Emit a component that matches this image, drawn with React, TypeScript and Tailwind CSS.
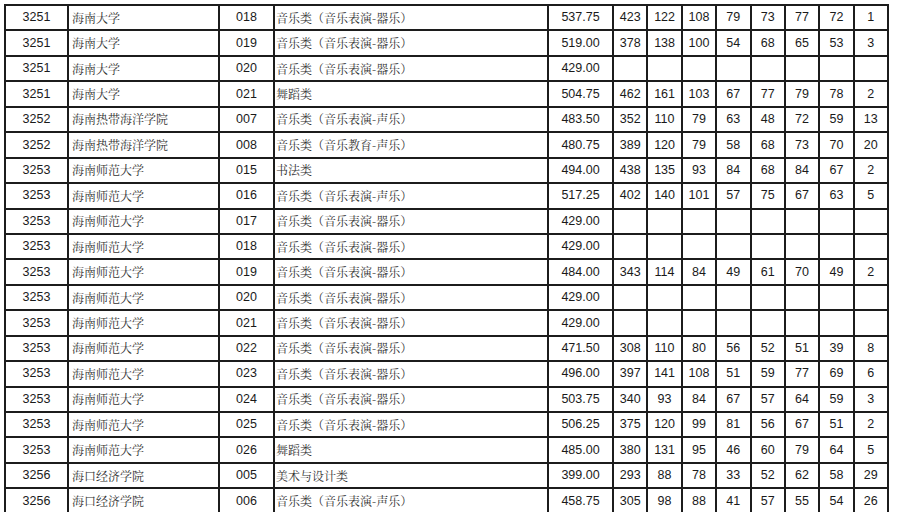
import React from 'react';

type Row = [string, string, string, string, string, string[]];

const ROWS: Row[] = [
  ['3251', '海南大学', '018', '音乐类（音乐表演-器乐）', '537.75', ['423', '122', '108', '79', '73', '77', '72', '1']],
  ['3251', '海南大学', '019', '音乐类（音乐表演-器乐）', '519.00', ['378', '138', '100', '54', '68', '65', '53', '3']],
  ['3251', '海南大学', '020', '音乐类（音乐表演-器乐）', '429.00', []],
  ['3251', '海南大学', '021', '舞蹈类', '504.75', ['462', '161', '103', '67', '77', '79', '78', '2']],
  ['3252', '海南热带海洋学院', '007', '音乐类（音乐表演-声乐）', '483.50', ['352', '110', '79', '63', '48', '72', '59', '13']],
  ['3252', '海南热带海洋学院', '008', '音乐类（音乐教育-声乐）', '480.75', ['389', '120', '79', '58', '68', '73', '70', '20']],
  ['3253', '海南师范大学', '015', '书法类', '494.00', ['438', '135', '93', '84', '68', '84', '67', '2']],
  ['3253', '海南师范大学', '016', '音乐类（音乐表演-声乐）', '517.25', ['402', '140', '101', '57', '75', '67', '63', '5']],
  ['3253', '海南师范大学', '017', '音乐类（音乐表演-器乐）', '429.00', []],
  ['3253', '海南师范大学', '018', '音乐类（音乐表演-器乐）', '429.00', []],
  ['3253', '海南师范大学', '019', '音乐类（音乐表演-器乐）', '484.00', ['343', '114', '84', '49', '61', '70', '49', '2']],
  ['3253', '海南师范大学', '020', '音乐类（音乐表演-器乐）', '429.00', []],
  ['3253', '海南师范大学', '021', '音乐类（音乐表演-器乐）', '429.00', []],
  ['3253', '海南师范大学', '022', '音乐类（音乐表演-器乐）', '471.50', ['308', '110', '80', '56', '52', '51', '39', '8']],
  ['3253', '海南师范大学', '023', '音乐类（音乐表演-器乐）', '496.00', ['397', '141', '108', '51', '59', '77', '69', '6']],
  ['3253', '海南师范大学', '024', '音乐类（音乐表演-器乐）', '503.75', ['340', '93', '84', '67', '57', '64', '59', '3']],
  ['3253', '海南师范大学', '025', '音乐类（音乐表演-器乐）', '506.25', ['375', '120', '99', '81', '56', '67', '51', '2']],
  ['3253', '海南师范大学', '026', '舞蹈类', '485.00', ['380', '131', '95', '46', '60', '79', '64', '5']],
  ['3256', '海口经济学院', '005', '美术与设计类', '399.00', ['293', '88', '78', '33', '52', '62', '58', '29']],
  ['3256', '海口经济学院', '006', '音乐类（音乐表演-声乐）', '458.75', ['305', '98', '88', '41', '57', '55', '54', '26']],
];

const cell = 'h-[25.45px] border-r-2 border-b-2 border-[#1c1c1c] flex items-center overflow-hidden whitespace-nowrap';
const num = `${cell} justify-center font-['Liberation_Sans',Arial,sans-serif] text-[12.5px] text-[#1a1a1a]`;
const han = `${cell} font-['Noto_Serif_CJK_SC','Noto_Sans_CJK_SC',serif] font-normal text-[12px] text-[#333]`;

export default function App() {
  return (
    <div className="w-[906px] h-[519px] bg-white overflow-hidden">
      <div className="pl-[4px] pt-[4px]">
        <div className="h-[508px] overflow-hidden w-fit">
          <div className="grid grid-cols-[63px_151px_55px_274px_65px_repeat(8,34.375px)] border-l-2 border-t-2 border-[#1c1c1c]">
            {ROWS.map(([code, school, major, name, score, stats], i) => (
              <React.Fragment key={i}>
                <div className={num}>{code}</div>
                <div className={`${han} pl-[3px]`}>{school}</div>
                <div className={num}>{major}</div>
                <div className={`${han} pl-[1px]`}>{name}</div>
                <div className={num}>{score}</div>
                {Array.from({ length: 8 }).map((_, j) => (
                  <div key={j} className={num}>{stats[j] ?? ''}</div>
                ))}
              </React.Fragment>
            ))}
          </div>
        </div>
      </div>
    </div>
  );
}
